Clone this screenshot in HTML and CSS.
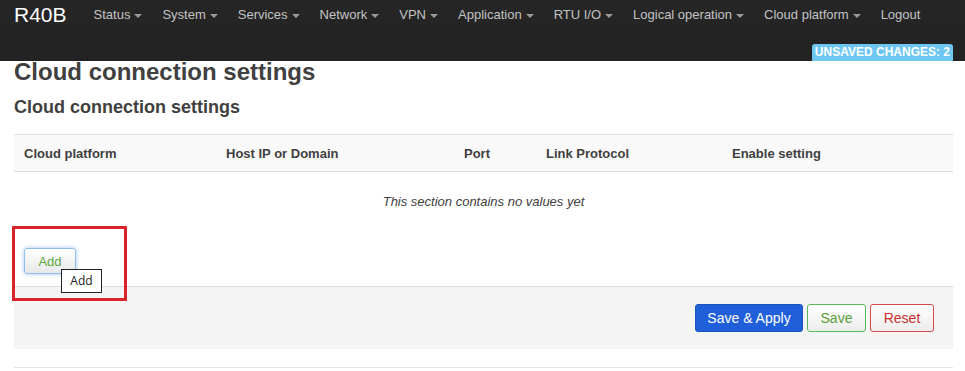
FILE: index.html
```html
<!DOCTYPE html>
<html>
<head>
<meta charset="utf-8">
<link rel="stylesheet" href="styles.css">
</head>
<body>
<header class="topbar">
  <div class="navrow">
    <span class="brand">R40B</span>
    <nav class="menu">
      <span class="item">Status <i class="caret"></i></span>
      <span class="item">System <i class="caret"></i></span>
      <span class="item">Services <i class="caret"></i></span>
      <span class="item">Network <i class="caret"></i></span>
      <span class="item">VPN <i class="caret"></i></span>
      <span class="item">Application <i class="caret"></i></span>
      <span class="item">RTU I/O <i class="caret"></i></span>
      <span class="item">Logical operation <i class="caret"></i></span>
      <span class="item">Cloud platform <i class="caret"></i></span>
      <span class="item">Logout</span>
    </nav>
  </div>
  <div class="badgerow"><span class="badge">UNSAVED CHANGES: 2</span></div>
</header>
<main class="content">
  <h2 class="title">Cloud connection settings</h2>
  <h3 class="subtitle">Cloud connection settings</h3>
  <table class="grid">
    <thead>
      <tr>
        <th class="c1">Cloud platform</th>
        <th class="c2">Host IP or Domain</th>
        <th class="c3">Port</th>
        <th class="c4">Link Protocol</th>
        <th class="c5">Enable setting</th>
      </tr>
    </thead>
    <tbody>
      <tr><td colspan="5" class="empty">This section contains no values yet</td></tr>
    </tbody>
  </table>
  <div class="addrow">
    <button class="btn btn-add">Add</button>
    <span class="tooltip">Add</span>
    <span class="highlight"></span>
  </div>
  <div class="actions">
    <button class="btn btn-apply">Save &amp; Apply</button>
    <button class="btn btn-save">Save</button>
    <button class="btn btn-reset">Reset</button>
  </div>
  <div class="footline"></div>
</main>
</body>
</html>
```
FILE: styles.css
```css
html, body {
  margin: 0;
  padding: 0;
  background: #fff;
  font-family: "Liberation Sans", Arial, sans-serif;
  color: #404040;
}
.topbar {
  height: 61px;
  background: linear-gradient(#262626, #222);
  display: flex;
  flex-direction: column;
  justify-content: space-between;
}
.navrow {
  display: flex;
  align-items: center;
  height: 30px;
  padding-left: 14px;
}
.brand {
  color: #fff;
  font-size: 21px;
  margin-right: 17px;
  line-height: 30px;
}
.menu {
  display: flex;
  align-items: center;
}
.item {
  color: #c3c3c3;
  font-size: 13px;
  padding: 0 10px;
  white-space: nowrap;
  display: flex;
  align-items: center;
  line-height: 30px;
}
.caret {
  display: inline-block;
  width: 0;
  height: 0;
  border-left: 4px solid transparent;
  border-right: 4px solid transparent;
  border-top: 4px solid #9a9a9a;
  margin-left: 4px;
  margin-top: 1px;
}
.badgerow {
  display: flex;
  justify-content: flex-end;
  padding-right: 12px;
}
.badge {
  background: #6ec6f3;
  color: #fff;
  font-weight: bold;
  font-size: 12px;
  line-height: 17px;
  padding: 0 3px;
  border-radius: 3px 3px 0 0;
}
.content {
  padding: 0 12px 0 14px;
}
.title {
  margin: 0;
  font-size: 24px;
  line-height: 22px;
  padding-top: 0;
  color: #404040;
}
.subtitle {
  margin: 0;
  font-size: 18px;
  line-height: 20px;
  padding-top: 14px;
  color: #404040;
}
.grid {
  width: 100%;
  border-collapse: collapse;
  margin-top: 17px;
  font-size: 13px;
}
.grid th {
  text-align: left;
  font-weight: bold;
  background: #f9f9f9;
  border-top: 1px solid #ddd;
  border-bottom: 1px solid #ddd;
  height: 36px;
  padding: 0 0 0 10px;
  color: #404040;
}
.c1 { width: 192px; }
.c2 { width: 228px; }
.c3 { width: 72px; }
.c4 { width: 176px; }
.empty {
  text-align: center;
  font-style: italic;
  height: 58px;
  padding: 0;
  color: #404040;
}
.addrow {
  position: relative;
  height: 56px;
  display: flex;
  align-items: flex-start;
  padding-left: 10px;
  padding-top: 18px;
  box-sizing: border-box;
}
.btn {
  font-family: "Liberation Sans", Arial, sans-serif;
  font-size: 13px;
  border-radius: 3px;
  cursor: pointer;
}
.btn-add {
  width: 52px;
  height: 26px;
  color: #5da83e;
  background: linear-gradient(#fff, #e8e8e8);
  border: 1px solid #8fbde8;
  box-shadow: 0 0 4px rgba(90, 160, 230, 0.6);
}
.tooltip {
  position: absolute;
  left: 47px;
  top: 39px;
  background: #fff;
  border: 1px solid #222;
  font-family: "Open Sans", "Noto Sans", sans-serif;
  font-size: 12px;
  color: #222;
  width: 39px;
  height: 22px;
  line-height: 22px;
  text-align: center;
}
.highlight {
  position: absolute;
  left: -2px;
  top: -4px;
  width: 109px;
  height: 69px;
  border: 3px solid #d9232d;
}
.actions {
  background: #f4f4f4;
  border-top: 1px solid #ddd;
  height: 62px;
  display: flex;
  justify-content: flex-end;
  align-items: center;
  gap: 4px;
  padding-right: 19px;
}
.btn-apply {
  width: 108px;
  height: 28px;
  background: #1f5fd9;
  border: 1px solid #1a52c0;
  color: #fff;
  font-size: 14px;
}
.btn-save {
  width: 59px;
  height: 28px;
  background: linear-gradient(#fff, #ececec);
  border: 1px solid #5cb85c;
  color: #5a9e3a;
  font-size: 14px;
}
.btn-reset {
  width: 64px;
  height: 28px;
  background: linear-gradient(#fff, #ececec);
  border: 1px solid #d24a4a;
  color: #c9302c;
  font-size: 14px;
}
.footline {
  margin-top: 18px;
  border-top: 1px solid #e5e5e5;
}
```
